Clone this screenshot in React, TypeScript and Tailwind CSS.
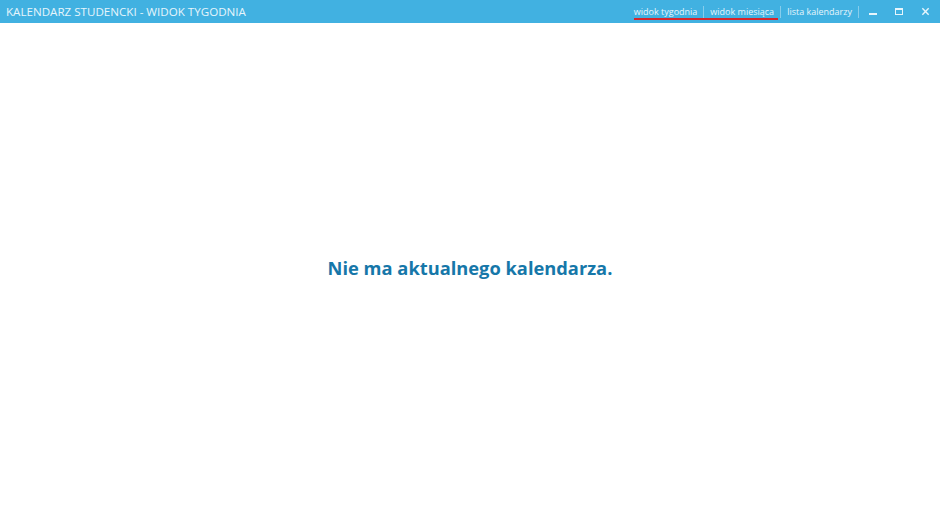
import React from "react";

const links = ["widok tygodnia", "widok miesiąca", "lista kalendarzy"];

export default function App() {
  return (
    <div className="w-[940px] h-[509px] bg-white flex flex-col font-['Open_Sans','Noto_Sans',sans-serif]">
      <header className="h-[23px] bg-[#41b1e1] flex items-center pl-[6px] pr-[10px] text-[#e6f5fc]">
        <div className="text-[11.6px] leading-none">KALENDARZ STUDENCKI - WIDOK TYGODNIA</div>
        <nav className="ml-auto flex items-center h-full text-[9px]">
          <div className="relative flex items-center h-full">
            {links.map((l) => (
              <React.Fragment key={l}>
                <span>{l}</span>
                <span className="w-px h-[12px] bg-[#86cdec] mx-[6px]" />
              </React.Fragment>
            ))}
            <div className="absolute left-0 top-[18px] w-[144px] h-[2px] bg-[#d6262c]" />
          </div>
          <div className="flex items-center ml-[4px] gap-[18px]">
            <span className="w-[8px] h-[2px] bg-[#e6f5fc] mt-[5px]" />
            <span className="w-[8px] h-[7px] border border-[#e6f5fc] border-t-2" />
            <svg width="9" height="9" viewBox="0 0 10 10">
              <path d="M1.5 1.5 L8.5 8.5 M8.5 1.5 L1.5 8.5" stroke="#e6f5fc" strokeWidth="1.6" />
            </svg>
          </div>
        </nav>
      </header>
      <main className="flex-1 flex items-center justify-center">
        <h1 className="text-[18.3px] font-bold text-[#1677a9] mt-[4px]">Nie ma aktualnego kalendarza.</h1>
      </main>
    </div>
  );
}
